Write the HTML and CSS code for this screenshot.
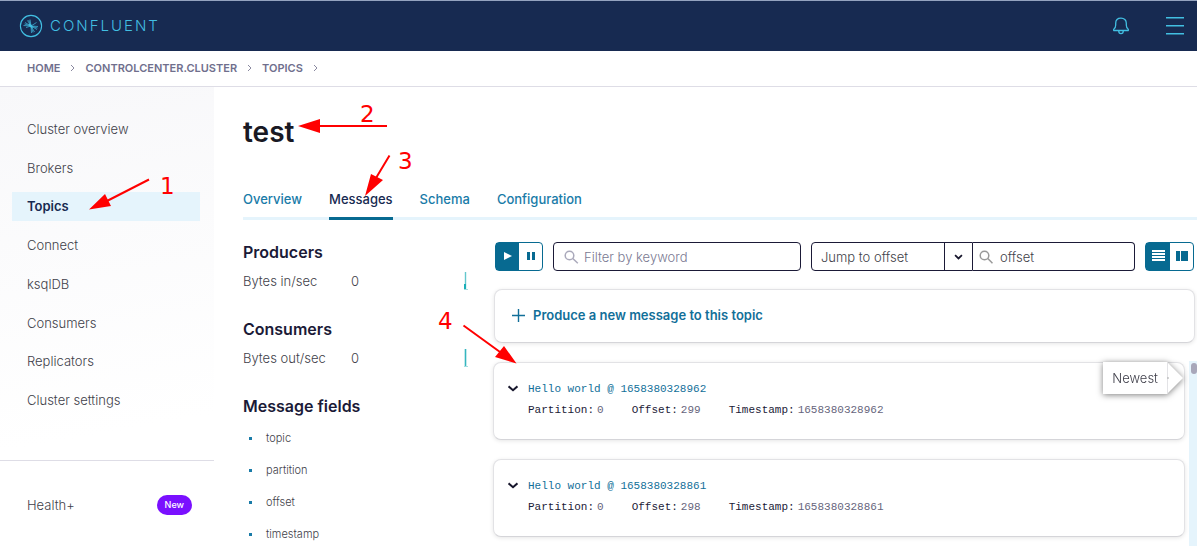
FILE: index.html
```html
<!DOCTYPE html>
<html lang="en">
<head>
<meta charset="utf-8">
<meta name="viewport" content="width=device-width, initial-scale=1">
<title>test - Messages</title>
<link rel="stylesheet" href="styles.css">
</head>
<body>
<header class="topbar">
  <a class="brand" href="#" aria-label="Confluent">
    <svg class="brand-mark" viewBox="0 0 24 24" aria-hidden="true">
      <circle cx="12" cy="12" r="10.6" fill="none" stroke="currentColor" stroke-width="1.1"/>
      <path d="M12 12 4.500 11.500M12 12 6 8.500M12 12 8.500 6.500M12 12 11 5.500M12 12 7 13.500M12 12 9.700 6M12 12 5.500 10M12 12 19 12.500M12 12 18 15.500M12 12 15.500 18M12 12 12.500 19M12 12 17.500 8.500M12 12 14 18.500M12 12 18.500 14" fill="none" stroke="currentColor" stroke-width=".7"/>
      <path d="M9.500 9.500l3 1.200 1.500 3.600-3-1.300z" fill="currentColor"/>
    </svg>
    <span class="brand-name">CONFLUENT</span>
  </a>
  <div class="topbar-actions">
    <button class="icon-button" type="button" aria-label="Notifications">
      <svg width="18" height="18" viewBox="0 0 18 18" fill="none" stroke="currentColor" stroke-width="1.3" stroke-linejoin="round"><path d="M1.700 13.500v-1.200C3.200 11.500 3.700 10 3.700 8V6.300C3.700 3 5.800 1.100 9 1.100S14.300 3 14.300 6.300V8c0 2 .5 3.500 2 4.300v1.200zM6.700 13.700c0 3.900 4.600 3.900 4.600 0"/></svg>
    </button>
    <button class="icon-button" type="button" aria-label="Menu">
      <svg width="18" height="20" viewBox="0 0 18 20" fill="none" stroke="currentColor" stroke-width="1.4"><path d="M0 1.700h18M0 9.700h18M0 17.700h18"/></svg>
    </button>
  </div>
</header>

<nav class="breadcrumb" aria-label="Breadcrumb">
  <a href="#">HOME</a>
  <svg class="crumb-sep" viewBox="0 0 5 8"><path d="M1 1l3 3-3 3"/></svg>
  <a href="#">CONTROLCENTER.CLUSTER</a>
  <svg class="crumb-sep" viewBox="0 0 5 8"><path d="M1 1l3 3-3 3"/></svg>
  <a href="#">TOPICS</a>
  <svg class="crumb-sep" viewBox="0 0 5 8"><path d="M1 1l3 3-3 3"/></svg>
</nav>

<div class="shell">
  <aside class="sidebar">
    <nav class="side-nav" aria-label="Cluster">
      <a class="side-link" href="#">Cluster overview</a>
      <a class="side-link" href="#">Brokers</a>
      <a class="side-link is-active" href="#" aria-current="page">Topics</a>
      <a class="side-link" href="#">Connect</a>
      <a class="side-link" href="#">ksqlDB</a>
      <a class="side-link" href="#">Consumers</a>
      <a class="side-link" href="#">Replicators</a>
      <a class="side-link" href="#">Cluster settings</a>
    </nav>
    <a class="health" href="#"><span>Health+</span><span class="pill">New</span></a>
  </aside>

  <main class="main">
    <h1 class="title">test</h1>
    <nav class="tabs" aria-label="Topic">
      <a class="tab" href="#">Overview</a>
      <a class="tab is-active" href="#" aria-current="page">Messages</a>
      <a class="tab" href="#">Schema</a>
      <a class="tab" href="#">Configuration</a>
    </nav>

    <div class="content">
      <section class="stats">
        <h2 class="stats-title">Producers</h2>
        <div class="stat">
          <span class="stat-label">Bytes in/sec</span><span>0</span>
          <svg class="spark" viewBox="0 0 6 20"><path d="M3.500 1v18" stroke="#63c7cd" stroke-width="1.400"/><path d="M3 13v6" stroke="#19aeb8" stroke-width="2"/><path d="M2 18.500h4" stroke="#a3dde0"/></svg>
        </div>
        <h2 class="stats-title">Consumers</h2>
        <div class="stat">
          <span class="stat-label">Bytes out/sec</span><span>0</span>
          <svg class="spark" viewBox="0 0 6 20"><path d="M3.500 1v18" stroke="#35b6bf" stroke-width="1.600"/><path d="M2 18.500h4" stroke="#a3dde0"/></svg>
        </div>
        <h2 class="stats-title">Message fields</h2>
        <ul class="fields">
          <li>topic</li>
          <li>partition</li>
          <li>offset</li>
          <li>timestamp</li>
        </ul>
      </section>

      <section class="messages">
        <div class="toolbar">
          <div class="toggle">
            <button class="toggle-button is-on" type="button" aria-label="Play"><svg width="8" height="8" viewBox="0 0 8 8" fill="currentColor"><path d="M0 0l8 4-8 4z"/></svg></button>
            <button class="toggle-button" type="button" aria-label="Pause"><svg width="8" height="8" viewBox="0 0 8 8" fill="currentColor"><path d="M0 0h3v8H0zM5 0h3v8H5z"/></svg></button>
          </div>
          <label class="field field-filter">
            <svg class="search" viewBox="0 0 15 14"><circle cx="5.500" cy="5.500" r="4.300"/><path d="M8.800 8.500l5 4.700"/></svg>
            <input type="text" placeholder="Filter by keyword" aria-label="Filter by keyword">
          </label>
          <div class="jump">
            <div class="select-box">
              <select aria-label="Jump mode"><option>Jump to offset</option></select>
              <svg class="chevron chevron-small" viewBox="0 0 10 7"><path d="M1 1.300 5 5.200l4-3.900"/></svg>
            </div>
            <label class="field field-offset">
              <svg class="search search-gray" viewBox="0 0 15 14"><circle cx="5.500" cy="5.500" r="4.300"/><path d="M8.800 8.500l4.700 4.700"/></svg>
              <input type="text" value="offset" aria-label="Offset">
            </label>
          </div>
          <div class="toggle">
            <button class="toggle-button toggle-wide is-on" type="button" aria-label="List view"><svg width="13" height="11" viewBox="0 0 13 11" fill="currentColor"><path d="M0 0h13v2H0zM0 3h13v2H0zM0 6h13v2H0zM0 9h13v2H0z"/></svg></button>
            <button class="toggle-button" type="button" aria-label="Card view"><svg width="12" height="10" viewBox="0 0 12 10" fill="currentColor"><path d="M0 0h4v10H0zM5 0h7v10H5z"/></svg></button>
          </div>
        </div>

        <button class="produce card" type="button">
          <svg width="13" height="13" viewBox="0 0 13 13" fill="none" stroke="currentColor" stroke-width="1.400"><path d="M6.500 0v13M0 6.500h13"/></svg>
          Produce a new message to this topic
        </button>

        <div class="list">
          <div class="rows">
            <article class="message card">
              <button class="expand" type="button" aria-label="Expand message 299"><svg class="chevron" viewBox="0 0 10 7"><path d="M.5 1.300 5 5.200l4.500-3.900"/></svg></button>
              <div class="message-body">
                <a class="message-value" href="#">Hello world @ 1658380328962</a>
                <dl class="meta">
                  <div><dt>Partition:</dt><dd>0</dd></div>
                  <div><dt>Offset:</dt><dd>299</dd></div>
                  <div><dt>Timestamp:</dt><dd>1658380328962</dd></div>
                </dl>
              </div>
            </article>
            <article class="message card">
              <button class="expand" type="button" aria-label="Expand message 298"><svg class="chevron" viewBox="0 0 10 7"><path d="M.5 1.300 5 5.200l4.500-3.900"/></svg></button>
              <div class="message-body">
                <a class="message-value" href="#">Hello world @ 1658380328861</a>
                <dl class="meta">
                  <div><dt>Partition:</dt><dd>0</dd></div>
                  <div><dt>Offset:</dt><dd>298</dd></div>
                  <div><dt>Timestamp:</dt><dd>1658380328861</dd></div>
                </dl>
              </div>
            </article>
          </div>
          <div class="track"><div class="thumb"></div></div>
          <div class="newest"><span>Newest</span><svg width="16" height="32" viewBox="0 0 16 32"><path d="M0 0l16 16L0 32z" fill="#fff"/><path d="M.5 1v30" stroke="#e3e3e6"/><path d="M0 16h2" stroke="#aaa"/></svg></div>
        </div>
      </section>
    </div>
  </main>
</div>

<svg class="callouts" width="560" height="380" viewBox="0 0 560 380">
  <g stroke="#f00" stroke-width="2"><path d="M149 179.500 105 202M387 126h-70M389.500 155.500 376 178M463.500 325.500 500 352"/></g>
  <g fill="#f00">
    <path d="M89 209.500 105 194l6 12zM298 126l22-7v14zM365 196l6-22 12 6zM516.500 363.500 495 357l9-11z"/>
    <text x="160" y="194">1</text>
    <text x="360" y="122">2</text>
    <text x="398" y="169">3</text>
    <text x="438" y="329">4</text>
  </g>
</svg>
</body>
</html>
```
FILE: styles.css
```css
* { box-sizing: border-box; }

body {
  margin: 0;
  height: 100vh;
  overflow: hidden;
  display: flex;
  flex-direction: column;
  background: #fff;
  color: #3f3f4a;
  font-family: Inter, "Liberation Sans", sans-serif;
  font-size: 13px;
  font-weight: 300;
  line-height: 16px;
}

a { color: inherit; text-decoration: none; }
h1, h2, ul, dl, dd { margin: 0; padding: 0; }
button, input, select { font: inherit; color: inherit; }
button { padding: 0; border: 0; background: none; cursor: pointer; }
svg { display: block; flex: none; }

/* Top bar */
.topbar {
  flex: none;
  display: flex;
  align-items: center;
  justify-content: space-between;
  height: 51px;
  padding: 0 13px 0 19px;
  border-top: 1px solid #94a3bf;
  background: #172a51;
  color: #42bfe2;
}
.brand { display: flex; align-items: center; gap: 7px; }
.brand-mark { width: 24px; height: 24px; }
.brand-name { font-size: 15px; line-height: 20px; letter-spacing: 2px; }
.topbar-actions { display: flex; align-items: center; gap: 36px; }

/* Breadcrumb */
.breadcrumb {
  flex: none;
  display: flex;
  align-items: center;
  gap: 10px;
  height: 36px;
  padding: 0 0 2px 27px;
  border-bottom: 1px solid #dedde6;
  color: #706f8d;
  font-size: 11px;
  font-weight: 600;
}
.crumb-sep { width: 5px; height: 8px; fill: none; stroke: #8a89a0; }

.shell { flex: 1; min-height: 0; display: flex; }

/* Sidebar */
.sidebar {
  flex: none;
  width: 214px;
  display: flex;
  flex-direction: column;
  background: linear-gradient(170deg, #f8f8fa, #fff 360px);
}
.side-nav {
  display: grid;
  align-content: space-between;
  min-height: 374px;
  padding: 28px 14px 45px 12px;
  border-bottom: 1px solid #dedde6;
}
.side-link { padding: 0 15px; line-height: 29px; }
.side-link.is-active { background: #e5f4fc; color: #172a51; font-weight: 600; }
.health {
  display: flex;
  align-items: center;
  justify-content: space-between;
  padding: 34px 22px 0 27px;
}
.pill {
  padding: 0 8px;
  border-radius: 10px;
  background: #7a10ff;
  color: #fff;
  font-size: 9px;
  font-weight: 500;
  line-height: 20px;
}

/* Main */
.main { flex: 1; min-width: 0; display: flex; flex-direction: column; padding-left: 29px; }
.title { margin-top: 28px; color: #191924; font-size: 28px; font-weight: 600; line-height: 34px; }
.tabs {
  display: flex;
  gap: 27px;
  margin-top: 38px;
  border-bottom: 3px solid #e5f4fc;
  color: #197ba8;
  font-weight: 500;
}
.tab { padding: 4px 0 10px; margin-bottom: -3px; border-bottom: 3px solid transparent; }
.tab.is-active { border-color: #076a91; color: #172a51; }
.content { flex: 1; min-height: 0; display: flex; }

/* Statistics column */
.stats { flex: none; width: 250px; padding: 22px 25px 0 0; }
.stats-title { color: #1b1a37; font-size: 16px; font-weight: 600; line-height: 20px; }
.stat { display: flex; align-items: center; height: 20px; margin: 9px 0 28px; }
.stat-label { width: 108px; }
.spark { width: 6px; height: 20px; margin-left: auto; fill: none; }
.fields { display: grid; gap: 16px; margin-top: 14px; list-style: none; font-size: 11px; }
.fields li { display: flex; align-items: center; gap: 14px; padding-left: 6px; }
.fields li::before { content: ""; width: 3px; height: 3px; background: #197ba8; }

/* Messages column */
.messages { flex: 1; min-width: 0; display: flex; flex-direction: column; padding-top: 22px; }
.toolbar { display: flex; gap: 10px; margin: 0 3px 0 2px; }
.toggle { flex: none; display: flex; height: 29px; border: 1px solid #076a91; border-radius: 4px; color: #076a91; }
.toggle-button { display: grid; place-items: center; width: 23px; padding-bottom: 2px; }
.toggle-button.toggle-wide { width: 24px; }
.toggle-button.is-on { background: #076a91; color: #fff; }
.field { display: flex; align-items: center; gap: 5px; height: 29px; padding: 0 10px; border: 1px solid #1b1a37; border-radius: 4px; }
.field input { flex: 1; width: 0; min-width: 0; padding: 0; border: 0; outline: 0; background: none; }
.field input::placeholder { color: #7a7992; opacity: 1; }
.field-filter { flex: 1; }
.search { width: 15px; height: 14px; fill: none; stroke: #aaa9bb; stroke-width: 1.5px; }
.search-gray { stroke: #999; }
.jump { flex: none; display: flex; }
.select-box { display: grid; grid-template-columns: 133px 27px; align-items: center; justify-items: center; height: 29px; border: 1px solid #1b1a37; border-radius: 4px 0 0 4px; }
.select-box select {
  grid-area: 1 / 1 / 2 / 3;
  width: 100%;
  height: 27px;
  padding: 0 9px;
  border: 0;
  appearance: none;
  background: linear-gradient(#1b1a37, #1b1a37) 132px 0 / 1px 100% no-repeat;
}
.select-box .chevron { grid-area: 1 / 2; pointer-events: none; }
.chevron { width: 10px; height: 7px; fill: none; stroke: #17162c; stroke-width: 2px; }
.chevron-small { width: 9px; height: 6px; }
.field-offset { gap: 6px; width: 162px; padding: 0 6px; border-left: 0; border-radius: 0 4px 4px 0; }

.card { border: 1px solid #e2e2e5; border-bottom-color: #d5d5d9; border-radius: 8px; background: #fff; box-shadow: 0 1px 4px #0000001a; }
.produce {
  display: flex;
  align-items: center;
  gap: 8px;
  height: 54px;
  margin: 18px 2px 0 1px;
  padding: 0 17px 2px;
  color: #126f99;
  font-weight: 600;
}
.list { position: relative; flex: 1; min-height: 0; display: flex; gap: 4px; margin-top: 18px; }
.rows { flex: 1; display: flex; flex-direction: column; gap: 19px; padding-top: 1px; }
.message { display: flex; align-items: flex-start; gap: 10px; min-height: 78px; padding: 18px 14px; font-family: "Liberation Mono", monospace; font-size: 11px; }
.expand { padding: 4px 0; }
.message-body { display: grid; gap: 5px; }
.message-value { color: #126f99; }
.meta { display: flex; gap: 28px; }
.meta div { display: flex; gap: 3px; }
.meta dt { color: #1b1a37; }
.meta dd { color: #66657c; }
.track { width: 8px; background: #e5f4fc; padding: 2px 0 0 2px; }
.thumb { height: 11px; border-radius: 3px; background: #a8a7ba; }
.newest {
  position: absolute;
  top: 1px;
  right: 14px;
  display: flex;
  filter: drop-shadow(0 1px 3px #00000080);
}
.newest span { padding: 8px 9px; background: #fff; }

/* Numbered callouts over the page */
.callouts { position: absolute; top: 0; left: 0; pointer-events: none; font-family: "DejaVu Sans", sans-serif; font-size: 23px; font-weight: 400; }
```
